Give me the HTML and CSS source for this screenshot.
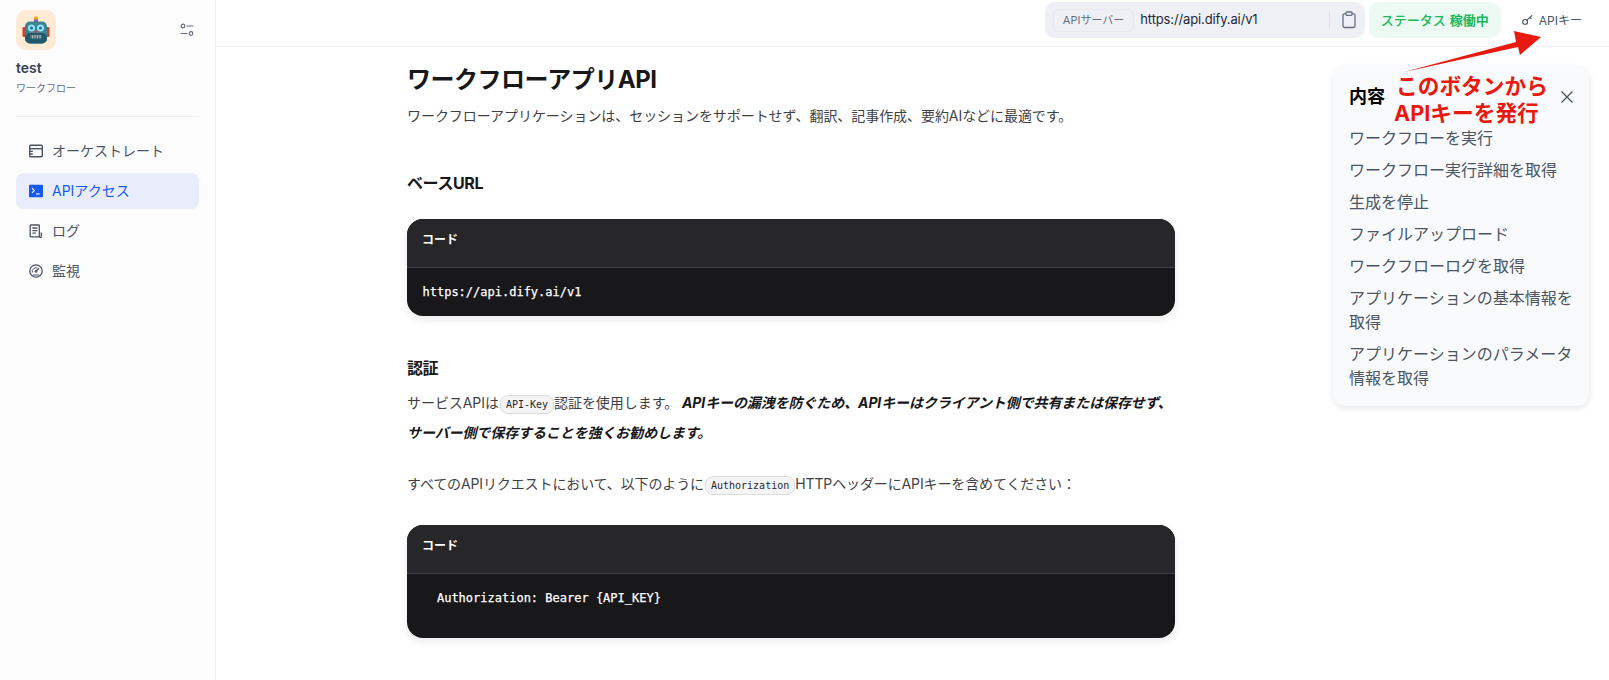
FILE: index.html
```html
<!DOCTYPE html>
<html lang="ja">
<head>
<meta charset="utf-8">
<title>API</title>
<link rel="stylesheet" href="styles.css">
</head>
<body>
<div class="app">
  <aside class="sidebar">
    <div class="brand">
      <div class="brand-top">
        <div class="app-icon">
          <svg width="28" height="30" viewBox="0 0 28 30">
            <circle cx="14" cy="3.5" r="2.2" fill="#f5a623"/>
            <rect x="12" y="4.5" width="4" height="3" fill="#7a5bb5"/>
            <rect x="0.5" y="12" width="3.5" height="10" rx="1.2" fill="#c8403a"/>
            <rect x="24" y="12" width="3.5" height="10" rx="1.2" fill="#c8403a"/>
            <rect x="3" y="6.5" width="22" height="22" rx="5" fill="#3f8391"/>
            <rect x="3" y="18" width="22" height="10.5" rx="5" fill="#1f5a6c"/>
            <circle cx="9.5" cy="13" r="3.6" fill="#8fe3f2"/>
            <circle cx="18.5" cy="13" r="3.6" fill="#8fe3f2"/>
            <circle cx="9.5" cy="13" r="1.6" fill="#2a6fa8"/>
            <circle cx="18.5" cy="13" r="1.6" fill="#2a6fa8"/>
            <path d="M14 14.5l2 3h-4z" fill="#d9433c"/>
            <rect x="8" y="20" width="12" height="3.4" rx="1" fill="#5d6f78"/>
            <path d="M10.5 20v3.4M13 20v3.4M15.5 20v3.4M18 20v3.4" stroke="#b8c4c9" stroke-width=".9"/>
          </svg>
        </div>
        <svg class="settings" width="16" height="16" viewBox="0 0 16 16" fill="none" stroke="#676f83" stroke-width="1.2" stroke-linecap="round">
          <circle cx="4" cy="4" r="1.8"/><path d="M8 4h6"/>
          <circle cx="12" cy="11.5" r="1.8"/><path d="M2 11.5h6"/>
        </svg>
      </div>
      <div class="app-name">test</div>
      <div class="app-type">ワークフロー</div>
    </div>
    <nav class="nav">
      <a class="nav-item">
        <svg width="14" height="14" viewBox="0 0 14 14" fill="none" stroke="#495464" stroke-width="1.4"><rect x=".7" y="1.2" width="12.6" height="11.6" rx="1"/><path d="M.7 4.7h12.6"/><path d="M1 7.4h2.8M1 10h2.8" stroke-width="1.4"/></svg>
        <span>オーケストレート</span>
      </a>
      <a class="nav-item active">
        <svg width="14" height="14" viewBox="0 0 14 14"><rect y=".8" width="14" height="12.4" rx=".8" fill="#155aef"/><path d="M3 4.2l2.4 2.3L3 8.8" fill="none" stroke="#fff" stroke-width="1.1"/><path d="M7 10h3.6" stroke="#fff" stroke-width="1.1"/></svg>
        <span>APIアクセス</span>
      </a>
      <a class="nav-item">
        <svg width="14" height="14" viewBox="0 0 14 14" fill="none" stroke="#495464" stroke-width="1.3"><path d="M10.6 12.9H2.2a1 1 0 0 1-1-1V1.6a.6.6 0 0 1 .6-.6h7.9a.6.6 0 0 1 .6.6v10.8a1 1 0 0 0 2 0V8.6"/><path d="M3.4 4h5M3.4 6.6h5M3.4 9.2h3.4"/></svg>
        <span>ログ</span>
      </a>
      <a class="nav-item">
        <svg width="14" height="14" viewBox="0 0 14 14" fill="none" stroke="#495464" stroke-width="1.3"><circle cx="7" cy="7" r="6.2"/><path d="M7 7.4l2.8-3.2" stroke-width="1.4"/><circle cx="7" cy="7.4" r="1.3" fill="#495464" stroke="none"/><path d="M3.3 8.6a3.9 3.9 0 0 1 5-4.6M3.6 11h6.8" stroke-width="1"/></svg>
        <span>監視</span>
      </a>
    </nav>
  </aside>
  <div class="main">
    <header class="topbar">
      <div class="server">
        <span class="server-chip">APIサーバー</span>
        <span class="server-url">https://api.dify.ai/v1</span>
        <span class="server-sep"></span>
        <svg width="16" height="18" viewBox="0 0 16 18" fill="none" stroke="#676f83" stroke-width="1.3"><path d="M5 2.8H3.4a1.4 1.4 0 0 0-1.4 1.4v10.9a1.4 1.4 0 0 0 1.4 1.4h9.2a1.4 1.4 0 0 0 1.4-1.4V4.2a1.4 1.4 0 0 0-1.4-1.4H11"/><rect x="5" y="1" width="6" height="3.4" rx=".8"/></svg>
      </div>
      <div class="status"><span>ステータス</span> <b>稼働中</b></div>
      <div class="apikey">
        <svg width="13" height="13" viewBox="0 0 12 12" fill="none" stroke="#495464" stroke-width="1.1" stroke-linecap="round"><circle cx="3.8" cy="8.2" r="2.2"/><path d="M5.4 6.6l4.6-4.2M8.2 4l1.2 1.2"/></svg>
        <span>APIキー</span>
      </div>
    </header>
    <div class="content">
      <article class="article">
        <h1>ワークフローアプリAPI</h1>
        <p class="lead">ワークフローアプリケーションは、セッションをサポートせず、翻訳、記事作成、要約AIなどに最適です。</p>
        <h2 class="h-base">ベースURL</h2>
        <section class="code">
          <div class="code-head">コード</div>
          <pre class="code-body">https://api.dify.ai/v1</pre>
        </section>
        <h2 class="h-auth">認証</h2>
        <p class="auth">サービスAPIは<code>API-Key</code>認証を使用します。 <strong>APIキーの漏洩を防ぐため、APIキーはクライアント側で共有または保存せず、サーバー側で保存することを強くお勧めします。</strong></p>
        <p class="all">すべてのAPIリクエストにおいて、以下のように<code>Authorization</code>HTTPヘッダーにAPIキーを含めてください：</p>
        <section class="code code-next">
          <div class="code-head">コード</div>
          <pre class="code-body">  Authorization: Bearer {API_KEY}

</pre>
        </section>
      </article>
      <aside class="toc">
        <div class="toc-head">
          <span>内容</span>
          <svg width="14" height="14" viewBox="0 0 14 14" fill="none" stroke="#4b5563" stroke-width="1.3"><path d="M1.5 1.5l11 11M12.5 1.5l-11 11"/></svg>
        </div>
        <ul class="toc-list">
          <li>ワークフローを実行</li>
          <li>ワークフロー実行詳細を取得</li>
          <li>生成を停止</li>
          <li>ファイルアップロード</li>
          <li>ワークフローログを取得</li>
          <li>アプリケーションの基本情報を取得</li>
          <li>アプリケーションのパラメータ情報を取得</li>
        </ul>
      </aside>
    </div>
  </div>
</div>
<svg class="arrow" width="150" height="50" viewBox="0 0 150 50"><polygon points="0,41 112,11 110,0 137,6 116,24 114,16" fill="#e8190f"/></svg>
<div class="note"><span class="note-first">このボタンから</span><span>APIキーを発行</span></div>
</body>
</html>
```

FILE: styles.css
```css
* { box-sizing: border-box; }
html, body { margin: 0; height: 100%; overflow: hidden; }
body {
  font-family: Inter, "Noto Sans CJK JP", sans-serif;
  color: #3f3f46;
  background: #fff;
  position: relative;
}
.app { display: flex; height: 680px; }

.sidebar {
  width: 216px;
  flex: none;
  background: #fcfcfd;
  border-right: 1px solid #f0f0f3;
  padding: 10px 16px 0;
}
.brand { border-bottom: 1px solid #f0f0f3; height: 107px; }
.brand-top { display: flex; justify-content: space-between; align-items: center; padding-right: 4px; }
.app-icon {
  width: 40px; height: 40px;
  border-radius: 10px;
  background: #ffead5;
  display: flex; align-items: center; justify-content: center;
}
.app-name { margin-top: 8px; font-size: 14px; line-height: 20px; font-weight: 600; color: #354052; }
.app-type { margin-top: 1px; font-size: 10px; line-height: 18px; color: #676f83; }

.nav { margin-top: 16px; display: flex; flex-direction: column; gap: 4px; }
.nav-item {
  height: 36px;
  display: flex; align-items: center; gap: 9px;
  padding-left: 13px;
  border-radius: 8px;
  font-size: 14px;
  color: #495464;
}
.nav-item span { margin-bottom: 2px; }
.nav-item.active { background: #e9edfb; color: #155aef; }

.main { flex: 1; min-width: 0; display: flex; flex-direction: column; }
.topbar {
  height: 47px;
  flex: none;
  border-bottom: 1px solid #f0f0f3;
  display: flex; justify-content: flex-end; align-items: flex-start;
  padding: 2px 27px 0 0;
  gap: 4px;
}
.server {
  width: 320px; height: 36px;
  background: #eff0f5;
  border-radius: 10px;
  display: flex; align-items: center;
  padding: 0 8px;
}
.server-chip {
  height: 23px; line-height: 21px;
  padding: 0 9px;
  border: 1px solid #e7e8ee;
  border-radius: 6px;
  font-size: 11px;
  color: #676f83;
}
.server-url { margin-left: 6px; margin-bottom: 2px; font-size: 13px; letter-spacing: -0.13px; color: #1d2939; flex: 1; }
.server-sep { width: 1px; height: 18px; background: #e0e1e8; margin-right: 11px; }
.status {
  width: 132px; height: 36px;
  background: #ecfaf3;
  border-radius: 10px;
  display: flex; align-items: center; justify-content: center; gap: 4px;
  padding-bottom: 2px;
  font-size: 13px;
  font-weight: 500;
  color: #17b85e;
}
.status b { font-weight: 700; }
.apikey {
  height: 36px; margin-left: 16px;
  display: flex; align-items: center; gap: 5px;
  padding-bottom: 1px;
  font-size: 12px;
  color: #495464;
}

.content {
  flex: 1; min-height: 0;
  display: flex; align-items: flex-start; justify-content: space-between;
  padding: 0 20px 0 191px;
}
.article { width: 768px; flex: none; font-size: 14px; line-height: 28px; }
h1, h2 { margin: 0; color: #18181b; font-weight: 700; }
h1 { font-size: 24px; line-height: 32px; margin-top: 17px; letter-spacing: -0.02em; }
h2 { font-size: 16px; line-height: 28px; letter-spacing: -0.025em; }
p { margin: 0; letter-spacing: -0.06px; }
.lead { margin-top: 6px; }
.h-base { margin-top: 39px; }
.code {
  margin-top: 22px;
  border-radius: 16px;
  overflow: hidden;
  background: #18181b;
  box-shadow: 0 4px 8px rgba(0,0,0,.08);
}
.code-next { margin-top: 27px; }
.code-head {
  height: 49px;
  background: #27272a;
  border-bottom: 1px solid #3f3f46;
  padding: 11px 15px 0;
  font-size: 12px; line-height: 20px; font-weight: 700; color: #fff;
}
.code-body {
  margin: 0;
  padding: 16px 15.5px;
  font-family: "DejaVu Sans Mono", monospace;
  font-size: 12px; line-height: 16px;
  color: #fff;
  -webkit-text-stroke: 0.25px #fff;
}
.h-auth { margin-top: 38px; }
.auth { margin-top: 6px; line-height: 30px; }
.all { margin-top: 22px; letter-spacing: -0.12px; }
strong { font-weight: 700; font-style: italic; color: #18181b; letter-spacing: -0.1px; }
code {
  font-family: "DejaVu Sans Mono", monospace;
  font-size: 10px; line-height: 17px;
  display: inline-block;
  padding: 0 5px;
  margin: 0 0 0 1px;
  background: #f4f4f5;
  border: 1px solid #dcdce0;
  border-radius: 8px;
  color: #27272a;
  vertical-align: 0;
  letter-spacing: 0;
}

.toc {
  width: 256px; height: 340px;
  margin-top: 19px;
  background: #f9fafb;
  border-radius: 12px;
  box-shadow: 0 2px 6px rgba(16,24,40,.1);
  padding: 16px 12px 0 16px;
}
.toc-head {
  display: flex; justify-content: space-between; align-items: center;
  height: 28px;
  padding: 2px 3px 0 0;
  font-size: 18px; font-weight: 700; color: #000;
}
.toc-head span { margin-bottom: 4px; }
.toc-list { list-style: none; margin: 16px 0 0; padding: 0; font-size: 16px; line-height: 24px; color: #4b5563; }
.toc-list li { margin-bottom: 8px; }

.arrow { position: absolute; left: 1404px; top: 31px; }
.note {
  position: absolute; left: 1394px; top: 73px;
  font-size: 21.7px; line-height: 27px; font-weight: 700;
  color: #e8190f;
}
.note span { display: block; white-space: nowrap; }
.note .note-first { margin-left: 2px; }
```
